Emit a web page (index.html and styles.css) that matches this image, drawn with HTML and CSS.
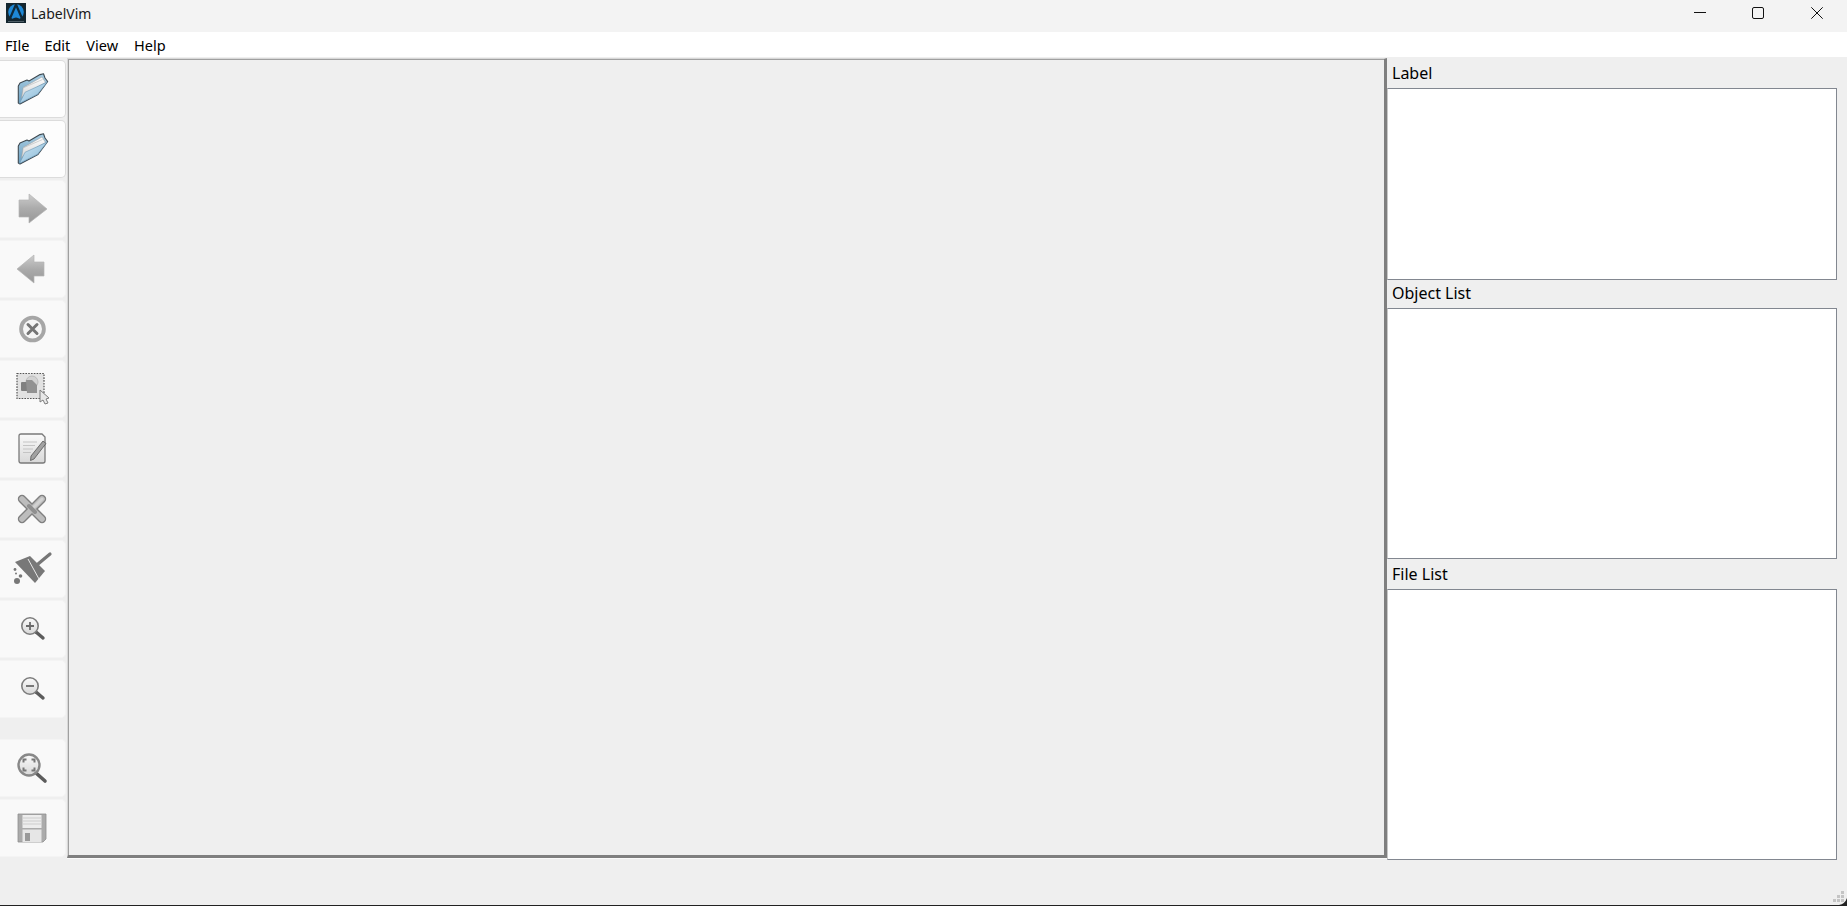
FILE: index.html
```html
<!DOCTYPE html>
<html lang="en">
<head>
<meta charset="utf-8">
<title>LabelVim</title>
<link rel="stylesheet" href="styles.css">
</head>
<body>
<svg class="defs" aria-hidden="true">
  <defs>
    <linearGradient id="gv" x1="0" y1="0" x2="0" y2="1"><stop offset="0" stop-color="#cdcdcd"/><stop offset="0.5" stop-color="#ababab"/><stop offset="1" stop-color="#979797"/></linearGradient>
    <linearGradient id="gl" x1="0" y1="0" x2="0" y2="1"><stop offset="0" stop-color="#fafafa"/><stop offset="1" stop-color="#d8d8d8"/></linearGradient>
    <linearGradient id="gb" x1="0" y1="0" x2="1" y2="1"><stop offset="0" stop-color="#cfe6f4"/><stop offset="1" stop-color="#86b8d6"/></linearGradient>
    <linearGradient id="gb2" x1="0" y1="0" x2="0" y2="1"><stop offset="0" stop-color="#a9cde2"/><stop offset="1" stop-color="#6c9fc0"/></linearGradient>
    <linearGradient id="gp" x1="0" y1="0" x2="0" y2="1"><stop offset="0" stop-color="#ffffff"/><stop offset="1" stop-color="#d4d4d4"/></linearGradient>
    <symbol id="folder" viewBox="0 0 32 32">
      <path d="M1.3 30 L1.3 13 L3 10 L10 7 L12 8 L23 1.6 L26.5 .7 L28 5 L30.7 8.5 L21 21.5 L3 31 Z" fill="url(#gb2)" stroke="#3f4a52" stroke-width="1.1" stroke-linejoin="round"/>
      <path d="M4.5 25 L6.2 14.5 L25 4 L28.5 9.5 L8 21 Z" fill="url(#gp)" stroke="#9c9c9c" stroke-width=".5"/>
      <path d="M7 14.5 L25.5 6.5" stroke="#b5b5b5" stroke-width=".6"/>
      <path d="M2.6 30.3 L8 19.3 L30.2 9 L20.6 21.2 Z" fill="url(#gb)" stroke="#6d97b4" stroke-width=".6" stroke-linejoin="round"/>
    </symbol>
    <symbol id="mag" viewBox="0 0 32 32">
      <path d="M19 19 L26 25" stroke="#5c5c5c" stroke-width="3.4" stroke-linecap="round"/>
      <circle cx="13" cy="13" r="8.2" fill="url(#gl)" stroke="#7d7d7d" stroke-width="1.6"/>
    </symbol>
  </defs>
</svg>

<header class="titlebar">
  <svg class="logo" viewBox="0 0 20 20" aria-hidden="true">
    <rect width="20" height="20" fill="#14262f"/>
    <circle cx="10" cy="9" r="7.8" fill="#1e88d6"/>
    <path d="M10 1.5 L4 15.5 M10 1.5 L16 15.5" stroke="#0f2a3a" stroke-width="2.2" fill="none"/>
    <path d="M6 16 Q10 13 14 16 V17 H6 Z" fill="#14262f"/>
    <rect x="2" y="18" width="16" height="1" fill="#4f5f68"/>
  </svg>
  <span class="apptitle">LabelVim</span>
  <div class="winctl">
    <svg class="wc" viewBox="0 0 12 12" aria-hidden="true"><path d="M0 5.5 H12" stroke="#111" stroke-width="1"/></svg>
    <svg class="wc" viewBox="0 0 12 12" aria-hidden="true"><rect x=".5" y=".5" width="11" height="11" rx="1.5" fill="none" stroke="#111"/></svg>
    <svg class="wc wc-close" viewBox="0 0 12 12" aria-hidden="true"><path d="M.3 .3 L11.7 11.7 M11.7 .3 L.3 11.7" stroke="#111" stroke-width="1"/></svg>
  </div>
</header>

<nav class="menubar">
  <span class="menu menu-file">FIle</span>
  <span class="menu menu-edit">Edit</span>
  <span class="menu menu-view">View</span>
  <span class="menu menu-help">Help</span>
</nav>

<main class="main">
  <aside class="toolbar">
    <button class="tool on"><svg class="ico" aria-hidden="true"><use href="#folder"/></svg></button>
    <button class="tool on"><svg class="ico" aria-hidden="true"><use href="#folder"/></svg></button>
    <button class="tool"><svg class="ico" viewBox="0 0 32 32" aria-hidden="true"><path d="M2 7 H12 V1 L30 16 L12 30 V24 H2 Z" fill="url(#gv)" stroke="#b4b4b4" stroke-width=".7"/></svg></button>
    <button class="tool"><svg class="ico" viewBox="0 0 32 32" aria-hidden="true"><path d="M27 9 H17 V2 L0 16 L17 30 V23 H27 Z" fill="url(#gv)" stroke="#b4b4b4" stroke-width=".7"/></svg></button>
    <button class="tool"><svg class="ico" viewBox="0 0 32 32" aria-hidden="true"><circle cx="15.5" cy="16" r="11.4" fill="#f5f5f5" stroke="#a6a6a6" stroke-width="3.8"/><path d="M11 11.5 L20 20.5 M20 11.5 L11 20.5" stroke="#757575" stroke-width="3" stroke-linecap="round"/></svg></button>
    <button class="tool"><svg class="ico" viewBox="0 0 32 32" aria-hidden="true"><rect x="0" y=".5" width="27" height="25" fill="#e2e2e2" stroke="#555" stroke-width="1.2" stroke-dasharray="1.6 1.2"/><circle cx="15" cy="9" r="6" fill="#d2d2d2" stroke="#bbb"/><rect x="4" y="9" width="10" height="9" rx="1" fill="#808080"/><path d="M9 7 H15 L20 12 V20 H10 Z" fill="#929292"/><path d="M23 17 L23 29 L26 27 L28 31 L31 30 L29 26 L32 25 Z" fill="#e8e8e8" stroke="#7d7d7d" stroke-width="1"/></svg></button>
    <button class="tool"><svg class="ico" viewBox="0 0 32 32" aria-hidden="true"><path d="M4 1 H25 L28 4 V28 Q28 30 26 30 H4 Q2 30 2 28 V3 Q2 1 4 1 Z" fill="url(#gl)" stroke="#7a7a7a" stroke-width="1.3"/><path d="M6 9 H20 M6 12.5 H18 M6 16 H16 M6 19.5 H14" stroke="#c4c4c4" stroke-width="1"/><path d="M14 23 L26 8 L29 10.5 L17 26 L13.5 27.5 Z" fill="#a2a2a2" stroke="#555" stroke-width=".8"/></svg></button>
    <button class="tool"><svg class="ico" viewBox="0 0 32 32" aria-hidden="true"><path d="M5 6 L25 26 M25 6 L5 26" stroke="#808080" stroke-width="8.4" stroke-linecap="round"/><path d="M5 6 L25 26 M25 6 L5 26" stroke="#bdbdbd" stroke-width="5.6" stroke-linecap="round"/><path d="M15 16 L25 6" stroke="#d2d2d2" stroke-width="3" stroke-linecap="round"/><path d="M12 13 L18 19" stroke="#8f8f8f" stroke-width="4" stroke-linecap="round"/></svg></button>
    <button class="tool"><svg class="ico" viewBox="0 0 32 32" aria-hidden="true"><path d="M21 11 L33 1" stroke="#767676" stroke-width="3.2" stroke-linecap="round"/><path d="M-2 9 L13 3 L28 18 L18 30 Z" fill="#787878"/><path d="M11 6 L22 26" stroke="#e8e8e8" stroke-width="1"/><circle cx="0" cy="28" r="3" fill="#787878"/><circle cx="3.5" cy="23" r="1.8" fill="#787878"/><circle cx="-2" cy="16.5" r="1.4" fill="#787878"/><circle cx="-1" cy="20.5" r="1" fill="#787878"/></svg></button>
    <button class="tool"><svg class="ico" viewBox="0 0 32 32" aria-hidden="true"><use href="#mag"/><path d="M9 13 H17 M13 9 V17" stroke="#6a6a6a" stroke-width="1.8"/></svg></button>
    <button class="tool"><svg class="ico" viewBox="0 0 32 32" aria-hidden="true"><use href="#mag"/><path d="M9 13 H17" stroke="#6a6a6a" stroke-width="1.8"/></svg></button>
    <div class="sep"></div>
    <button class="tool"><svg class="ico" viewBox="0 0 32 32" aria-hidden="true"><path d="M19 21 L28 29" stroke="#5c5c5c" stroke-width="3.6" stroke-linecap="round"/><circle cx="12" cy="13" r="10.5" fill="url(#gl)" stroke="#888" stroke-width="2.4"/><path d="M6.5 10.5 V7.5 H9.5 M14.5 7.5 H17.5 V10.5 M17.5 15.5 V18.5 H14.5 M9.5 18.5 H6.5 V15.5" fill="none" stroke="#777" stroke-width="2"/></svg></button>
    <button class="tool"><svg class="ico" viewBox="0 0 32 32" aria-hidden="true"><path d="M1 2 H29 V27 L26 30 H1 Z" fill="#ababab" stroke="#8f8f8f" stroke-width=".8"/><rect x="5.5" y="3" width="19" height="13" fill="#ededed"/><path d="M5.5 6 H24.5 M5.5 9 H24.5 M5.5 12 H24.5" stroke="#cdcdcd"/><rect x="5.5" y="17.5" width="19" height="12.5" fill="#e6e6e6"/><rect x="8" y="21" width="5" height="8" fill="#999"/></svg></button>
  </aside>

  <section class="canvas"></section>

  <aside class="dock">
    <div class="dock-title title-label">Label</div>
    <div class="list"></div>
    <div class="dock-title title-object">Object List</div>
    <div class="list"></div>
    <div class="dock-title title-file">File List</div>
    <div class="list"></div>
  </aside>
</main>

<footer class="statusbar">
  <svg class="grip" viewBox="0 0 14 14" aria-hidden="true">
    <path d="M8 0h3v3H8zM4 4h3v3H4zM8 4h3v3H8zM0 8h3v3H0zM4 8h3v3H4zM8 8h3v3H8z" fill="#c4c4c4"/>
    <path d="M14 7 V14 H6 Q12 13 14 7 Z" fill="#222"/>
  </svg>
</footer>
</body>
</html>
```

FILE: styles.css
```css
* { box-sizing: border-box; }
html, body { margin: 0; height: 100%; }
body {
  display: flex;
  flex-direction: column;
  height: 906px;
  overflow: hidden;
  background: #efefef;
  font-family: "Noto Sans", "Open Sans", sans-serif;
  font-size: 16px;
  color: #000;
}
.defs { position: absolute; width: 0; height: 0; }

.titlebar {
  display: flex;
  align-items: center;
  height: 32px;
  flex: none;
  padding-left: 6px;
  background: #f3f3f3;
}
.logo { width: 20px; height: 20px; margin-top: -6px; }
.apptitle { margin-left: 5px; margin-top: -6px; font-size: 14px; color: #1a1a1a; }
.winctl { display: flex; align-items: center; margin-left: auto; margin-top: -6px; padding-right: 24px; gap: 46px; }
.wc { width: 12px; height: 12px; display: block; }
.wc-close { margin-left: 1px; }

.menubar {
  display: flex;
  align-items: center;
  height: 25px;
  flex: none;
  background: #fff;
  font-size: 14.5px;
}
.menu { display: block; }
.menu-file { margin-left: 5px; }
.menu-edit { margin-left: 15px; }
.menu-view { margin-left: 16px; }
.menu-help { margin-left: 16px; }

.main { display: flex; height: 803px; flex: none; }

.toolbar {
  display: flex;
  flex-direction: column;
  gap: 2px;
  width: 67px;
  flex: none;
  padding-top: 3px;
}
.tool {
  display: flex;
  align-items: center;
  justify-content: center;
  width: 66px;
  height: 58px;
  flex: none;
  padding: 0;
  background: #f9f9f9;
  border: 1px solid #f4f4f4;
  border-left: 0;
  border-radius: 0 5px 5px 0;
}
.tool.on { background: #fdfdfd; border-color: #dcdcdc; }
.ico { width: 32px; height: 32px; display: block; overflow: visible; }
.sep { height: 17px; flex: none; }

.canvas {
  width: 1320px;
  height: 800px;
  flex: none;
  margin-top: 1px;
  background: #efefef;
  border-style: solid;
  border-width: 1px 3px 3px 1px;
  border-color: #d8d8d8 #7f7f7f #7f7f7f #d8d8d8;
  box-shadow: inset 1px 1px 0 #a0a0a0, 0 1px 0 #fafafa;
}

.dock {
  display: grid;
  grid-template-rows: 31px 192px 28px 251px 30px 271px;
  width: 460px;
  flex: none;
  padding-right: 10px;
}
.dock-title { display: flex; align-items: center; padding-left: 5px; }
.title-object { padding-bottom: 2px; }
.title-file { padding-bottom: 1px; }
.list {
  background: #fff;
  border: 1px solid #828790;
  border-left-color: #c8c8c8;
}

.statusbar {
  flex: 1;
  position: relative;
  border-bottom: 1px solid #222;
}
.grip { position: absolute; right: 0; bottom: 0; width: 14px; height: 14px; }
```
